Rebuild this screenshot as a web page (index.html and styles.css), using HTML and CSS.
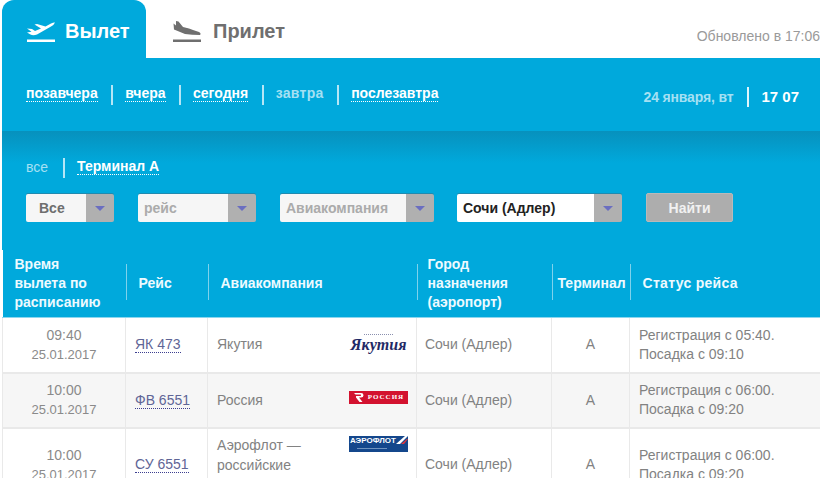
FILE: index.html
```html
<!DOCTYPE html>
<html lang="ru">
<head>
    <meta charset="UTF-8">
    <title>Табло вылета</title>
    <link rel="stylesheet" href="styles.css">
</head>
<body>
    <div class="board">
        <div class="tabs">
            <a class="tab tab-active">
                <svg class="tab-icon" width="30" height="24" viewBox="0 0 30 24">
                    <path d="M1 8.5 L6 9 L9 11 L15 8.5 L8.5 4.5 L11 4 L19.5 6.5 L25 3.5 Q28 2 29 2.5 Q28 5 25 6.5 L11 14.5 Q7 16 4.5 14.5 L1 12.5 L5.5 11.8 Z" fill="#fff"/>
                    <rect x="1" y="19.5" width="28" height="2.5" fill="#fff"/>
                </svg>
                Вылет
            </a>
            <a class="tab">
                <svg class="tab-icon" width="30" height="24" viewBox="0 0 30 24">
                    <path d="M4 1 L6.5 1.5 L11 7 L17 8.5 L21 10 L27 12 Q29.5 13.5 28 15 Q20 15 13 14 L2 9.5 L1.5 3.5 L4 5.5 Z" fill="#6f6f6f"/>
                    <rect x="1" y="19.5" width="28" height="2.5" fill="#6f6f6f"/>
                </svg>
                Прилет
            </a>
            <span class="updated">Обновлено в 17:06</span>
        </div>

        <div class="days">
            <nav class="links">
                <a class="link">позавчера</a>
                <a class="link">вчера</a>
                <a class="link">сегодня</a>
                <a class="link link-off">завтра</a>
                <a class="link">послезавтра</a>
            </nav>
            <div class="now">
                <span class="now-date">24 января, вт</span>
                <span class="now-time">17 07</span>
            </div>
        </div>

        <div class="filters">
            <nav class="links links-small">
                <a class="link link-off">все</a>
                <a class="link">Терминал А</a>
            </nav>
            <div class="search">
                <div class="select select-all"><span class="select-text text-dim">Все</span><span class="select-arrow"></span></div>
                <div class="select select-flight"><span class="select-text text-hint">рейс</span><span class="select-arrow"></span></div>
                <div class="select select-airline"><span class="select-text text-hint">Авиакомпания</span><span class="select-arrow"></span></div>
                <div class="select select-city"><span class="select-text text-dark">Сочи (Адлер)</span><span class="select-arrow"></span></div>
                <button class="find">Найти</button>
            </div>
        </div>

        <table class="flights">
            <colgroup>
                <col class="col-time">
                <col class="col-flight">
                <col class="col-airline">
                <col class="col-city">
                <col class="col-term">
                <col class="col-status">
            </colgroup>
            <thead>
                <tr>
                    <th class="th-first"><span class="th-in">Время<br>вылета по<br>расписанию</span></th>
                    <th class="th-flight"><span class="th-in">Рейс</span></th>
                    <th class="th-airline"><span class="th-in">Авиакомпания</span></th>
                    <th class="th-city"><span class="th-in">Город<br>назначения<br>(аэропорт)</span></th>
                    <th class="th-term"><span class="th-in">Терминал</span></th>
                    <th class="th-status"><span class="th-in">Статус рейса</span></th>
                </tr>
            </thead>
            <tbody>
                <tr>
                    <td class="time">09:40<small>25.01.2017</small></td>
                    <td><a class="flight">ЯК 473</a></td>
                    <td>
                        <div class="airline">
                            <span>Якутия</span>
                            <span class="logo logo-yak">Якутия</span>
                        </div>
                    </td>
                    <td class="city">Сочи (Адлер)</td>
                    <td class="term">А</td>
                    <td class="status">Регистрация с 05:40.<br>Посадка с 09:10</td>
                </tr>
                <tr class="row-alt">
                    <td class="time">10:00<small>25.01.2017</small></td>
                    <td><a class="flight">ФВ 6551</a></td>
                    <td>
                        <div class="airline">
                            <span>Россия</span>
                            <span class="logo logo-ros">
                                <svg width="11" height="9" viewBox="0 0 11 9">
                                    <path d="M1 0 H8 Q10.5 0 10.5 2.3 Q10.5 4.6 8 4.6 H6 L9.5 9 H6.5 L3 4.6 V3 H7.5 Q8 3 8 2.3 Q8 1.6 7.5 1.6 H2.5 Z" fill="#fff"/>
                                </svg>
                                РОССИЯ
                            </span>
                        </div>
                    </td>
                    <td class="city">Сочи (Адлер)</td>
                    <td class="term">А</td>
                    <td class="status">Регистрация с 06:00.<br>Посадка с 09:20</td>
                </tr>
                <tr>
                    <td class="time">10:00<small>25.01.2017</small></td>
                    <td><a class="flight">СУ 6551</a></td>
                    <td>
                        <div class="airline airline-top">
                            <span>Аэрофлот —<br>российские<br>авиалинии</span>
                            <span class="logo logo-afl">
                                АЭРОФЛОТ
                                <svg class="afl-wing" width="12" height="8" viewBox="0 0 12 8">
                                    <path d="M0 8 L9 0 H12 L4 8 Z" fill="#fff"/>
                                    <path d="M5 8 L11 3 H12 L8 8 Z" fill="#e0363c"/>
                                </svg>
                            </span>
                        </div>
                    </td>
                    <td class="city">Сочи (Адлер)</td>
                    <td class="term">А</td>
                    <td class="status">Регистрация с 06:00.<br>Посадка с 09:20</td>
                </tr>
            </tbody>
        </table>
    </div>
</body>
</html>
```

FILE: styles.css
```css
html, body {
    margin: 0;
    height: 478px;
    overflow: hidden;
    background: #fff;
}
body {
    font-family: "Liberation Sans", Arial, sans-serif;
    color: #828282;
}
.board {
    width: 818px;
    margin-left: 2px;
}

/* tabs */
.tabs {
    display: flex;
    height: 58px;
}
.tab {
    display: flex;
    align-items: center;
    gap: 9px;
    width: 144px;
    box-sizing: border-box;
    padding: 4px 0 0 24px;
    font-size: 20px;
    font-weight: bold;
    color: #6f6f6f;
}
.tab + .tab {
    gap: 11px;
    padding-left: 26px;
}
.tab-active {
    background: #00a9dc;
    border-radius: 12px 12px 0 0;
    color: #fff;
}
.tab-icon {
    flex: none;
    margin-top: 1px;
}
.updated {
    margin-left: auto;
    margin-top: 28px;
    font-size: 14px;
    color: #9a9a9a;
    white-space: nowrap;
}

/* day links */
.days {
    display: flex;
    justify-content: space-between;
    align-items: center;
    height: 73px;
    box-sizing: border-box;
    padding: 0 21px 2px 24px;
    background: #00a9dc;
}
.links {
    display: flex;
    align-items: center;
}
.link {
    font-size: 14px;
    font-weight: bold;
    color: #fff;
    border-bottom: 1px dotted #fff;
    line-height: 15px;
}
.link + .link {
    position: relative;
    margin-left: 27.5px;
}
.link + .link::before {
    content: "";
    position: absolute;
    left: -14px;
    top: -1px;
    width: 2px;
    height: 20px;
    background: #b5e6f6;
}
.link-off {
    color: #a5e0f3;
    border-bottom: 0;
    letter-spacing: .3px;
}
.now {
    display: flex;
    align-items: center;
    margin-top: 6px;
    font-size: 14px;
    font-weight: bold;
    color: #a5e0f3;
}
.now-date {
    letter-spacing: -.15px;
}
.now-time {
    margin-left: 14px;
    padding-left: 12px;
    border-left: 2px solid #dff5fc;
    font-size: 15px;
    line-height: 20px;
    color: #fff;
}

/* filters */
.filters {
    height: 119px;
    box-sizing: border-box;
    padding: 28px 0 0 24px;
    background: linear-gradient(#0791bd, #00a9dc 32px);
}
.links-small .link-off {
    font-weight: normal;
    letter-spacing: 0;
}
.links-small .link + .link {
    margin-left: 29px;
}
.search {
    display: flex;
    align-items: flex-start;
    margin-top: 19px;
}
.select {
    display: flex;
    height: 28px;
    border-radius: 2px;
    box-shadow: 0 -1px 0 rgba(70, 100, 120, .45);
    overflow: hidden;
    font-size: 14px;
    font-weight: bold;
}
.select-text {
    flex: 1;
    padding-left: 6px;
    line-height: 28px;
    background: #f6f6f6;
}
.select-arrow {
    position: relative;
    flex: none;
    width: 28px;
    background: #b0b0b0;
}
.select-arrow::after {
    content: "";
    position: absolute;
    left: 9px;
    top: 12px;
    border-style: solid;
    border-width: 5px 5px 0;
    border-color: #6a6ec0 transparent transparent;
}
.select-all {
    width: 88px;
}
.select-all .select-text {
    padding-left: 13px;
}
.select-flight {
    width: 118px;
    margin-left: 24px;
}
.select-airline {
    width: 154px;
    margin-left: 24px;
}
.select-city {
    width: 165px;
    margin-left: 23px;
}
.select-city .select-text {
    background: #fff;
}
.text-dim {
    color: #6e6e6e;
}
.text-hint {
    color: #ababab;
}
.text-dark {
    color: #222;
}
.find {
    width: 87px;
    height: 29px;
    margin: -1px 0 0 24px;
    padding: 0;
    border: 1px solid #b9b9b9;
    border-radius: 2px;
    background: #adadad;
    color: #f1f1f1;
    font: bold 14px "Liberation Sans", Arial, sans-serif;
}

/* table */
.flights {
    width: 818px;
    table-layout: fixed;
    border-collapse: collapse;
    font-size: 14px;
}
.col-time { width: 123px; }
.col-flight { width: 82px; }
.col-airline { width: 209px; }
.col-city { width: 135px; }
.col-term { width: 78px; }
.flights th {
    position: relative;
    height: 67px;
    padding: 0 0 0 12px;
    background: #00a9dc;
    border-bottom: 1px solid #8cd6ee;
    color: #eefaff;
    font-size: 14px;
    line-height: 19px;
    text-align: left;
}
.flights th + th::before {
    content: "";
    position: absolute;
    left: 0;
    top: 14px;
    width: 1px;
    height: 36px;
    background: #7fd2ec;
}
.flights .th-flight {
    padding-left: 13px;
}
.flights .th-airline {
    padding-left: 13px;
}
.flights .th-city {
    padding-left: 11px;
}
.flights .th-term {
    padding-left: 6px;
}
.flights .th-status {
    padding-left: 13px;
    letter-spacing: .3px;
}
.flights td {
    height: 55px;
    padding: 0 0 0 9px;
    border: 2px solid #e9e9e9;
    border-width: 0 1px 2px;
    line-height: 19px;
    box-sizing: border-box;
}
.flights td:last-child {
    border-right: 0;
}
.row-alt td {
    background: #f6f6f6;
}
.flights .time {
    padding: 0;
    text-align: center;
    color: #8a8a8a;
}
.time small {
    display: block;
    font-size: 13px;
}
.flights .city {
    padding-left: 8px;
}
.flights .term {
    padding: 0;
    text-align: center;
}
.flights .status {
    line-height: 19px;
}
.flight {
    color: #5f6596;
    border-bottom: 1px dotted #3d3f90;
}
.airline {
    display: flex;
    justify-content: space-between;
    align-items: center;
    padding-right: 8px;
}
.airline-top {
    align-items: flex-start;
    padding-top: 6px;
    padding-bottom: 6px;
    line-height: 20px;
}
.logo {
    display: flex;
    flex: none;
    align-items: center;
    justify-content: center;
    width: 59px;
    white-space: nowrap;
}
.logo-yak {
    position: relative;
    height: 15px;
    margin-bottom: 1px;
    font: italic bold 16px/15px "Liberation Serif", serif;
    color: #1f2a66;
}
.logo-yak::before {
    content: "";
    position: absolute;
    left: 15px;
    right: 15px;
    top: -3px;
    border-top: 1px dotted #8a8fae;
}
.logo-ros {
    gap: 4px;
    height: 13px;
    margin-bottom: 6px;
    background: #d3122f;
    color: #fff;
    font: bold 7px/13px "Liberation Serif", serif;
    letter-spacing: 1px;
}
.logo-afl {
    position: relative;
    justify-content: flex-start;
    align-items: flex-start;
    height: 16px;
    margin-top: 1px;
    padding-left: 1px;
    box-sizing: border-box;
    overflow: hidden;
    background: #14478c;
    color: #fff;
    font: bold 8px/10px "Liberation Sans", sans-serif;
}
.logo-afl::after {
    content: "";
    position: absolute;
    left: 8px;
    bottom: 3px;
    width: 30px;
    height: 1px;
    background: #6f93bf;
}
.afl-wing {
    position: absolute;
    right: 0;
    top: 0;
}
```
